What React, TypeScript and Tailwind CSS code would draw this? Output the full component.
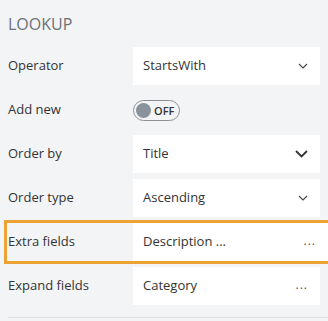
import { useState } from "react";

type Row = {
  label: string;
  value: string;
  kind: "select" | "selectBold" | "dots";
  highlight?: boolean;
};

const rowsAfterToggle: Row[] = [
  { label: "Order by", value: "Title", kind: "selectBold" },
  { label: "Order type", value: "Ascending", kind: "select" },
  { label: "Extra fields", value: "Description ...", kind: "dots", highlight: true },
  { label: "Expand fields", value: "Category", kind: "dots" },
];

function Chevron({ bold }: { bold?: boolean }) {
  if (bold) {
    return (
      <svg width="13" height="8" viewBox="0 0 13 8" className="text-[#333]">
        <path d="M1 1l5.5 5.5L12 1" fill="none" stroke="currentColor" strokeWidth="1.8" />
      </svg>
    );
  }
  return (
    <svg width="10" height="6" viewBox="0 0 10 6" className="text-[#444]">
      <path d="M1 1l4 4 4-4" fill="none" stroke="currentColor" strokeWidth="1.1" />
    </svg>
  );
}

function Field({ row }: { row: Row }) {
  return (
    <div className="flex h-[38px] flex-1 items-center justify-between bg-white pl-[10px] pr-[12px]">
      <span className="text-[13px] text-[#333]">{row.value}</span>
      {row.kind === "dots" ? (
        <span className="pb-[2px] text-[12px] tracking-[1px] text-[#555]">...</span>
      ) : (
        <Chevron bold={row.kind === "selectBold"} />
      )}
    </div>
  );
}

function FieldRow({ row }: { row: Row }) {
  return (
    <div
      className={
        row.highlight
          ? "mx-[4px] -mr-[3px] flex h-[44px] items-center border-[3px] border-[#eca235] pl-[1px] pr-0"
          : "mx-[8px] flex h-[44px] items-center"
      }
    >
      <div className={row.highlight ? "w-[125px] pl-[0px] text-[13px] text-[#333]" : "w-[125px] text-[13px] text-[#333]"}>
        {row.label}
      </div>
      <Field row={row} />
    </div>
  );
}

export default function App() {
  const [addNew, setAddNew] = useState(false);

  return (
    <div
      className="h-[321px] w-[328px] overflow-hidden bg-[#f3f4f6]"
      style={{ fontFamily: '"Open Sans", "Noto Sans", sans-serif' }}
    >
      <div className="flex h-[44px] items-center px-[8px] pt-[4px] text-[16px] text-[#6b7079]">LOOKUP</div>

      <FieldRow row={{ label: "Operator", value: "StartsWith", kind: "select" }} />

      <div className="mx-[8px] flex h-[44px] items-center">
        <div className="w-[125px] text-[13px] text-[#333]">Add new</div>
        <button
          onClick={() => setAddNew(!addNew)}
          className="flex h-[21px] w-[47px] items-center gap-[3px] rounded-full border border-[#8d9196] bg-[#f3f4f6] px-[2px]"
        >
          <span className="h-[15px] w-[15px] rounded-full bg-[#8a929c]" />
          <span className="text-[11px] font-semibold leading-none text-[#333]">{addNew ? "ON" : "OFF"}</span>
        </button>
      </div>

      {rowsAfterToggle.map((row) => (
        <FieldRow key={row.label} row={row} />
      ))}

      <div className="ml-[8px] mt-[9px] border-t border-[#dcdee2]" />
    </div>
  );
}
